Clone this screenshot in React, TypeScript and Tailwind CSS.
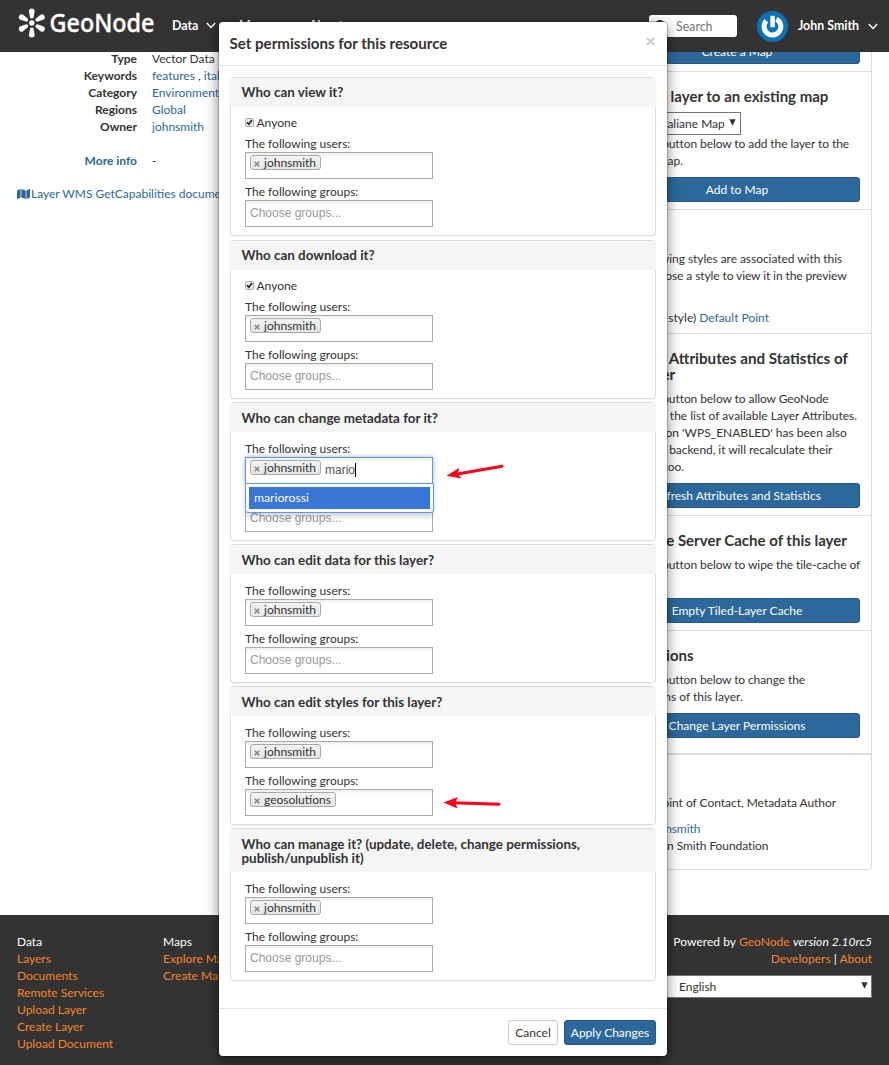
import React from "react";
import { FaMap, FaSearch } from "react-icons/fa";

const link = "text-[#2c689c]";

function Chevron() {
  return (
    <svg width="10" height="7" viewBox="0 0 10 7" fill="none" stroke="#fff" strokeWidth="1.4">
      <path d="M0.8 1 L5 5.4 L9.2 1" />
    </svg>
  );
}

function SelectArrow() {
  return (
    <svg width="7" height="7" viewBox="0 0 7 7" className="mb-[2px]">
      <path d="M0.3 0.3 H6.7 L3.5 6.7 Z" fill="#333" />
    </svg>
  );
}

function Logo() {
  const angles = [0, 60, 120, 180, 240, 300];
  return (
    <svg width="140" height="38" viewBox="0 0 140 38" className="shrink-0">
      <g fill="#fff">
        {angles.map((a) => (
          <path
            key={a}
            transform={`translate(14.8 16) rotate(${a})`}
            d="M-1.7 -5.2 L-2.9 -12.2 A2.95 2.95 0 0 1 2.9 -12.2 L1.7 -5.2 Q0 -3.6 -1.7 -5.2 Z"
          />
        ))}
        <circle cx="14.8" cy="16" r="2.7" />
      </g>
      <text
        x="32.5"
        y="25.3"
        fill="#fff"
        fontFamily="Noto Sans, sans-serif"
        fontWeight="500"
        fontSize="25.5"
        stroke="#fff"
        strokeWidth="0.4"
        textLength="105"
        lengthAdjust="spacingAndGlyphs"
      >
        GeoNode
      </text>
    </svg>
  );
}

function Navbar() {
  return (
    <header className="flex h-[52px] shrink-0 items-center bg-[#333] pl-[17px] pr-[11px] text-[12.4px] font-bold text-white">
      <Logo />
      <nav className="ml-[15px] flex items-center pb-[2px]">
        <span className="w-[34px]">Data</span>
        <Chevron />
        <span className="ml-[23px] w-[38px]">Maps</span>
        <Chevron />
        <span className="ml-[22px] w-[42px]">About</span>
        <Chevron />
      </nav>
      <div className="ml-auto flex h-[22px] w-[88px] items-center rounded-[3px] bg-white pl-[6px] font-normal text-[#777]">
        <FaSearch className="h-[12px] w-[12px] text-[#333]" />
        <span className="ml-[9px]">Search</span>
      </div>
      <svg width="31" height="31" viewBox="0 0 31 31" className="ml-5">
        <circle cx="15.5" cy="15.5" r="15.5" fill="#0a73b7" />
        <path d="M9.4 9.8 A8.4 8.4 0 1 0 19.4 8.2" fill="none" stroke="#fff" strokeWidth="5" />
        <path d="M15.6 4.8 V16.2" stroke="#fff" strokeWidth="4.4" />
      </svg>
      <span className="ml-[10px] w-[70px] whitespace-nowrap pb-[2px]">John Smith</span>
      <Chevron />
    </header>
  );
}

function InfoRow({ label, children, className = "" }: { label: React.ReactNode; children: React.ReactNode; className?: string }) {
  return (
    <div className={`flex h-[17px] whitespace-nowrap ${className}`}>
      <dt className="w-[137px] text-right font-bold">{label}</dt>
      <dd className="ml-[15px]">{children}</dd>
    </div>
  );
}

function ActionButton({ children }: { children: React.ReactNode }) {
  return (
    <button className="flex h-[25px] w-full items-center justify-center whitespace-nowrap rounded-[3px] border border-[#265a87] bg-[#2c689c] pt-px text-[12px] leading-none text-white">
      {children}
    </button>
  );
}

function Heading({ children }: { children: React.ReactNode }) {
  return <h4 className="whitespace-nowrap text-[15px] font-bold leading-[17px]">{children}</h4>;
}

function Panel({ className, children }: { className: string; children: React.ReactNode }) {
  return <section className={`whitespace-nowrap border-b border-[#ddd] px-[11px] ${className}`}>{children}</section>;
}

function Sidebar() {
  return (
    <aside className="h-[818px] w-[270px] overflow-hidden rounded-b-[4px] border border-t-0 border-[#ddd]">
      <Panel className="flex h-[20px] flex-col justify-end pb-[7px]">
        <div className="h-[25px] shrink-0"><ActionButton>Create a Map</ActionButton></div>
      </Panel>
      <Panel className="h-[138px] pt-[16px]">
        <Heading>Add the layer to an existing map</Heading>
        <div className="mt-[7px] flex h-[23px] w-[127px] items-center justify-between border border-[#767676] bg-white pl-[8px] pr-[4px]">
          <span>Strade Italiane Map</span>
          <SelectArrow />
        </div>
        <p><span className="tracking-[-0.09px]">Click the button below to add the layer to the</span><br />existing map.</p>
        <div className="mt-[8px]"><ActionButton>Add to Map</ActionButton></div>
      </Panel>
      <Panel className="h-[124px] pt-[15px]">
        <Heading>Styles</Heading>
        <p className="mt-[8px]">
          <span className="tracking-[-0.05px]">The following styles are associated with this</span><br />
          <span className="tracking-[-0.1px]">layer. Choose a style to view it in the preview</span><br />map.
        </p>
        <p className="mt-[8px] flex w-[155px] justify-end gap-[3px]"><span>(default style)</span><a className={link}>Default Point</a></p>
      </Panel>
      <Panel className="h-[182px] pt-[16px]">
        <h4 className="text-[15.2px] font-bold leading-[16px]">Refresh Attributes and Statistics of<br />this layer</h4>
        <p className="mt-[8px]"><span className="tracking-[-0.08px]">Click the button below to allow GeoNode</span><br />refreshing the list of available Layer Attributes.<br />If the option 'WPS_ENABLED' has been also<br /><span className="tracking-[-0.06px]">set on the backend, it will recalculate their</span><br />statistics too.</p>
        <div className="mt-[8px]"><ActionButton>Refresh Attributes and Statistics</ActionButton></div>
      </Panel>
      <Panel className="h-[115px] pt-[16px]">
        <Heading>Clear the Server Cache of this layer</Heading>
        <p className="mt-[7px]"><span className="tracking-[-0.09px]">Click the button below to wipe the tile-cache of</span><br />this layer.</p>
        <div className="mt-[8px]"><ActionButton>Empty Tiled-Layer Cache</ActionButton></div>
      </Panel>
      <Panel className="h-[124px] border-b-2 pt-[16px]">
        <Heading>Permissions</Heading>
        <p className="mt-[7px]"><span className="tracking-[-0.1px]">Click the button below to change the</span><br />permissions of this layer.</p>
        <div className="mt-[8px]"><ActionButton>Change Layer Permissions</ActionButton></div>
      </Panel>
      <div className="px-[11px] pt-[15px]">
        <Heading>About</Heading>
        <p className="mt-[7px] tracking-[-0.03px]">Owner, Point of Contact, Metadata Author</p>
        <div className="mt-[9px] pl-[35px] tracking-[-0.08px]">
          <a className={link}>johnsmith</a><br />John Smith Foundation
        </div>
      </div>
    </aside>
  );
}

function FooterColumn({ title, items }: { title: string; items: string[] }) {
  return (
    <div className="w-[146px]">
      <div>{title}</div>
      {items.map((i) => <div key={i} className="text-[#f58529]">{i}</div>)}
    </div>
  );
}

function Footer() {
  return (
    <footer className="flex h-[150px] shrink-0 bg-[#333] pl-[17px] pr-[17px] pt-[18px] text-white">
      <FooterColumn title="Data" items={["Layers", "Documents", "Remote Services", "Upload Layer", "Create Layer", "Upload Document"]} />
      <FooterColumn title="Maps" items={["Explore Maps", "Create Map"]} />
      <div className="ml-auto w-[240px] text-right">
        <div className="tracking-[0.05px]">Powered by <span className="text-[#f58529]">GeoNode</span> <i>version 2.10rc5</i></div>
        <div><span className="text-[#f58529]">Developers</span> | <span className="text-[#f58529]">About</span></div>
        <div className="mt-[8px] flex h-[23px] items-center justify-between border border-[#767676] bg-white pl-[46px] pr-[3px] text-[#333]">
          <span>English</span>
          <SelectArrow />
        </div>
      </div>
    </footer>
  );
}

function Tag({ name }: { name: string }) {
  return (
    <span className="flex h-[15px] items-center rounded-[3px] border border-[#aaa] bg-linear-to-b from-[#f4f4f4] to-[#e6e6e6] pl-[3px] pr-[4px] text-[12px] leading-none text-[#333]">
      <svg width="6" height="6" viewBox="0 0 6 6" className="mr-[4px] mt-[2px]" stroke="#888" strokeWidth="1.6">
        <path d="M0.7 0.7 L5.3 5.3 M5.3 0.7 L0.7 5.3" />
      </svg>
      {name}
    </span>
  );
}

type FieldProps = { label: string; tag?: string; typed?: string; placeholder?: string; option?: string; className?: string };

function Field({ label, tag, typed, placeholder, option, className = "" }: FieldProps) {
  const border = option ? "border-[#5897fb] shadow-[0_0_5px_rgba(0,0,0,0.3)]" : "border-[#aaa]";
  return (
    <div className={className}>
      <div className="h-[16px] leading-[15px]">{label}</div>
      <div className={`relative flex h-[27px] w-[188px] items-start border bg-linear-to-b from-[#eee] from-[1%] to-white to-[15%] pl-[4px] pt-[2px] ${border}`}>
        {tag && <Tag name={tag} />}
        {typed && (
          <span className="ml-[4px] mt-[3px] flex border-r border-black font-['Liberation_Sans',sans-serif] text-[12px] leading-[14px] text-[#555]">{typed}</span>
        )}
        {placeholder && (
          <span className="mt-[3px] font-['Liberation_Sans',sans-serif] text-[12px] leading-[15px] text-[#999]">{placeholder}</span>
        )}
        {option && (
          <div className="absolute -left-px top-[25px] z-10 h-[30px] w-[189px] rounded-b-[3px] border border-[#5897fb] bg-white px-[3px] pt-[3px] shadow-[0_4px_5px_rgba(0,0,0,0.15)]">
            <div className="h-[22px] bg-[#3875d7] pl-[5px] text-[12.2px] leading-[22px] text-white">{option}</div>
          </div>
        )}
      </div>
    </div>
  );
}

function Permission({ title, anyone, users, groups, typed, option, size, tall }: { title: React.ReactNode; anyone?: boolean; users: string; groups?: string; typed?: string; option?: string; size: string; tall?: boolean }) {
  return (
    <section className={`shrink-0 rounded-[4px] border border-[#ddd] bg-white shadow-[0_1px_1px_rgba(0,0,0,0.05)] ${size}`}>
      <h5 className={`-mx-px rounded-t-[3px] bg-[#f5f5f5] pl-[11.5px] text-[13.4px] font-bold leading-[14px] ${anyone ? "pt-[7px]" : "pt-[8px]"} ${tall ? "h-[43px]" : "h-[29px]"}`}>{title}</h5>
      <div className="pl-[14px] pt-[9px]">
        {anyone && (
          <div className="flex h-5 items-start leading-[13px]">
            <svg width="9" height="9" viewBox="0 0 9 9" className="mr-[2.5px] mt-[2px]">
              <rect x="0.5" y="0.5" width="8" height="8" rx="1" fill="#e8e8e8" stroke="#aaa" />
              <path d="M2 4.3 L3.8 6.3 L7 2" fill="none" stroke="#222" strokeWidth="1.6" />
            </svg>
            Anyone
          </div>
        )}
        <Field label="The following users:" tag={users} typed={typed} option={option} />
        <Field className="mt-[5px]" label="The following groups:" tag={groups} placeholder={groups ? undefined : "Choose groups..."} />
      </div>
    </section>
  );
}

function Modal() {
  return (
    <div className="absolute left-[219px] top-[22px] flex h-[1034px] w-[448px] flex-col rounded-[4px] bg-white shadow-[0_4px_14px_rgba(0,0,0,0.5),0_0_0_1px_rgba(0,0,0,0.2)]">
      <div className="flex h-[44px] shrink-0 items-center justify-between border-b border-[#e5e5e5] pl-[10.5px] pr-[12px]">
        <h4 className="text-[15.1px] font-bold">Set permissions for this resource</h4>
        <svg width="9" height="9" viewBox="0 0 9 9" className="mb-[5px]" stroke="#ccc" strokeWidth="1.8">
          <path d="M1 1 L8 8 M8 1 L1 8" />
        </svg>
      </div>
      <div className="flex h-[942px] shrink-0 flex-col gap-[3px] px-[11px] pt-[11px]">
        <Permission size="h-[159px] mb-px" title="Who can view it?" anyone users="johnsmith" />
        <Permission size="h-[159px]" title="Who can download it?" anyone users="johnsmith" />
        <Permission size="h-[139px]" title="Who can change metadata for it?" users="johnsmith" typed="mario" option="mariorossi" />
        <Permission size="h-[139px]" title="Who can edit data for this layer?" users="johnsmith" />
        <Permission size="h-[139px]" title="Who can edit styles for this layer?" users="johnsmith" groups="geosolutions" />
        <Permission size="h-[153px]" tall title={<>Who can manage it? (update, delete, change permissions,<br />publish/unpublish it)</>} users="johnsmith" />
      </div>
      <div className="flex flex-1 items-start justify-end gap-[6px] border-t border-[#e5e5e5] pr-[11px] pt-[11px] text-[12px]">
        <button className="h-[25px] w-[50px] rounded-[3px] border border-[#ccc] bg-white pt-px leading-none">Cancel</button>
        <button className="h-[25px] w-[92px] whitespace-nowrap rounded-[3px] border border-[#265a87] bg-[#2c689c] pt-px leading-none text-white">Apply Changes</button>
      </div>
      <svg className="absolute left-[223px] top-[438px]" width="66" height="26" viewBox="442 460 66 26">
        <path d="M502 466.3 L456 474.3" stroke="#ff0018" strokeWidth="3" strokeLinecap="round" />
        <path d="M446.5 475.8 L459.5 467.8 L457.5 473.8 L461.5 478.6 Z" fill="#ff0018" />
      </svg>
      <svg className="absolute left-[223px] top-[770px]" width="66" height="20" viewBox="442 792 66 20">
        <path d="M499 804.3 L454 802.8" stroke="#ff0018" strokeWidth="3" strokeLinecap="round" />
        <path d="M443.5 802.4 L458 797 L455 802.8 L457.6 808.4 Z" fill="#ff0018" />
      </svg>
    </div>
  );
}

export default function App() {
  return (
    <div className="relative flex h-[1065px] w-[889px] flex-col overflow-hidden bg-white font-['Lato',sans-serif] text-[12px] leading-[17px] text-[#333]">
      <Navbar />
      <main className="flex h-[863px] shrink-0 justify-between pr-[17px]">
        <div className="w-[400px]">
          <dl className="-mt-[2px]">
            <InfoRow label="Type">Vector Data</InfoRow>
            <InfoRow label="Keywords"><a className={link}>features</a> , <a className={link}>italy</a></InfoRow>
            <InfoRow label="Category"><a className={link}>Environment</a></InfoRow>
            <InfoRow label="Regions"><a className={link}>Global</a></InfoRow>
            <InfoRow label="Owner"><a className={link}>johnsmith</a></InfoRow>
            <InfoRow className="mt-[17px]" label={<span className={link}>More info</span>}>-</InfoRow>
          </dl>
          <a className={`mt-[16px] flex items-center whitespace-nowrap pl-[17px] ${link}`}>
            <FaMap className="mr-[1px] h-[12px] w-[13px]" />
            Layer WMS GetCapabilities document
          </a>
        </div>
        <Sidebar />
      </main>
      <Footer />
      <Modal />
    </div>
  );
}
